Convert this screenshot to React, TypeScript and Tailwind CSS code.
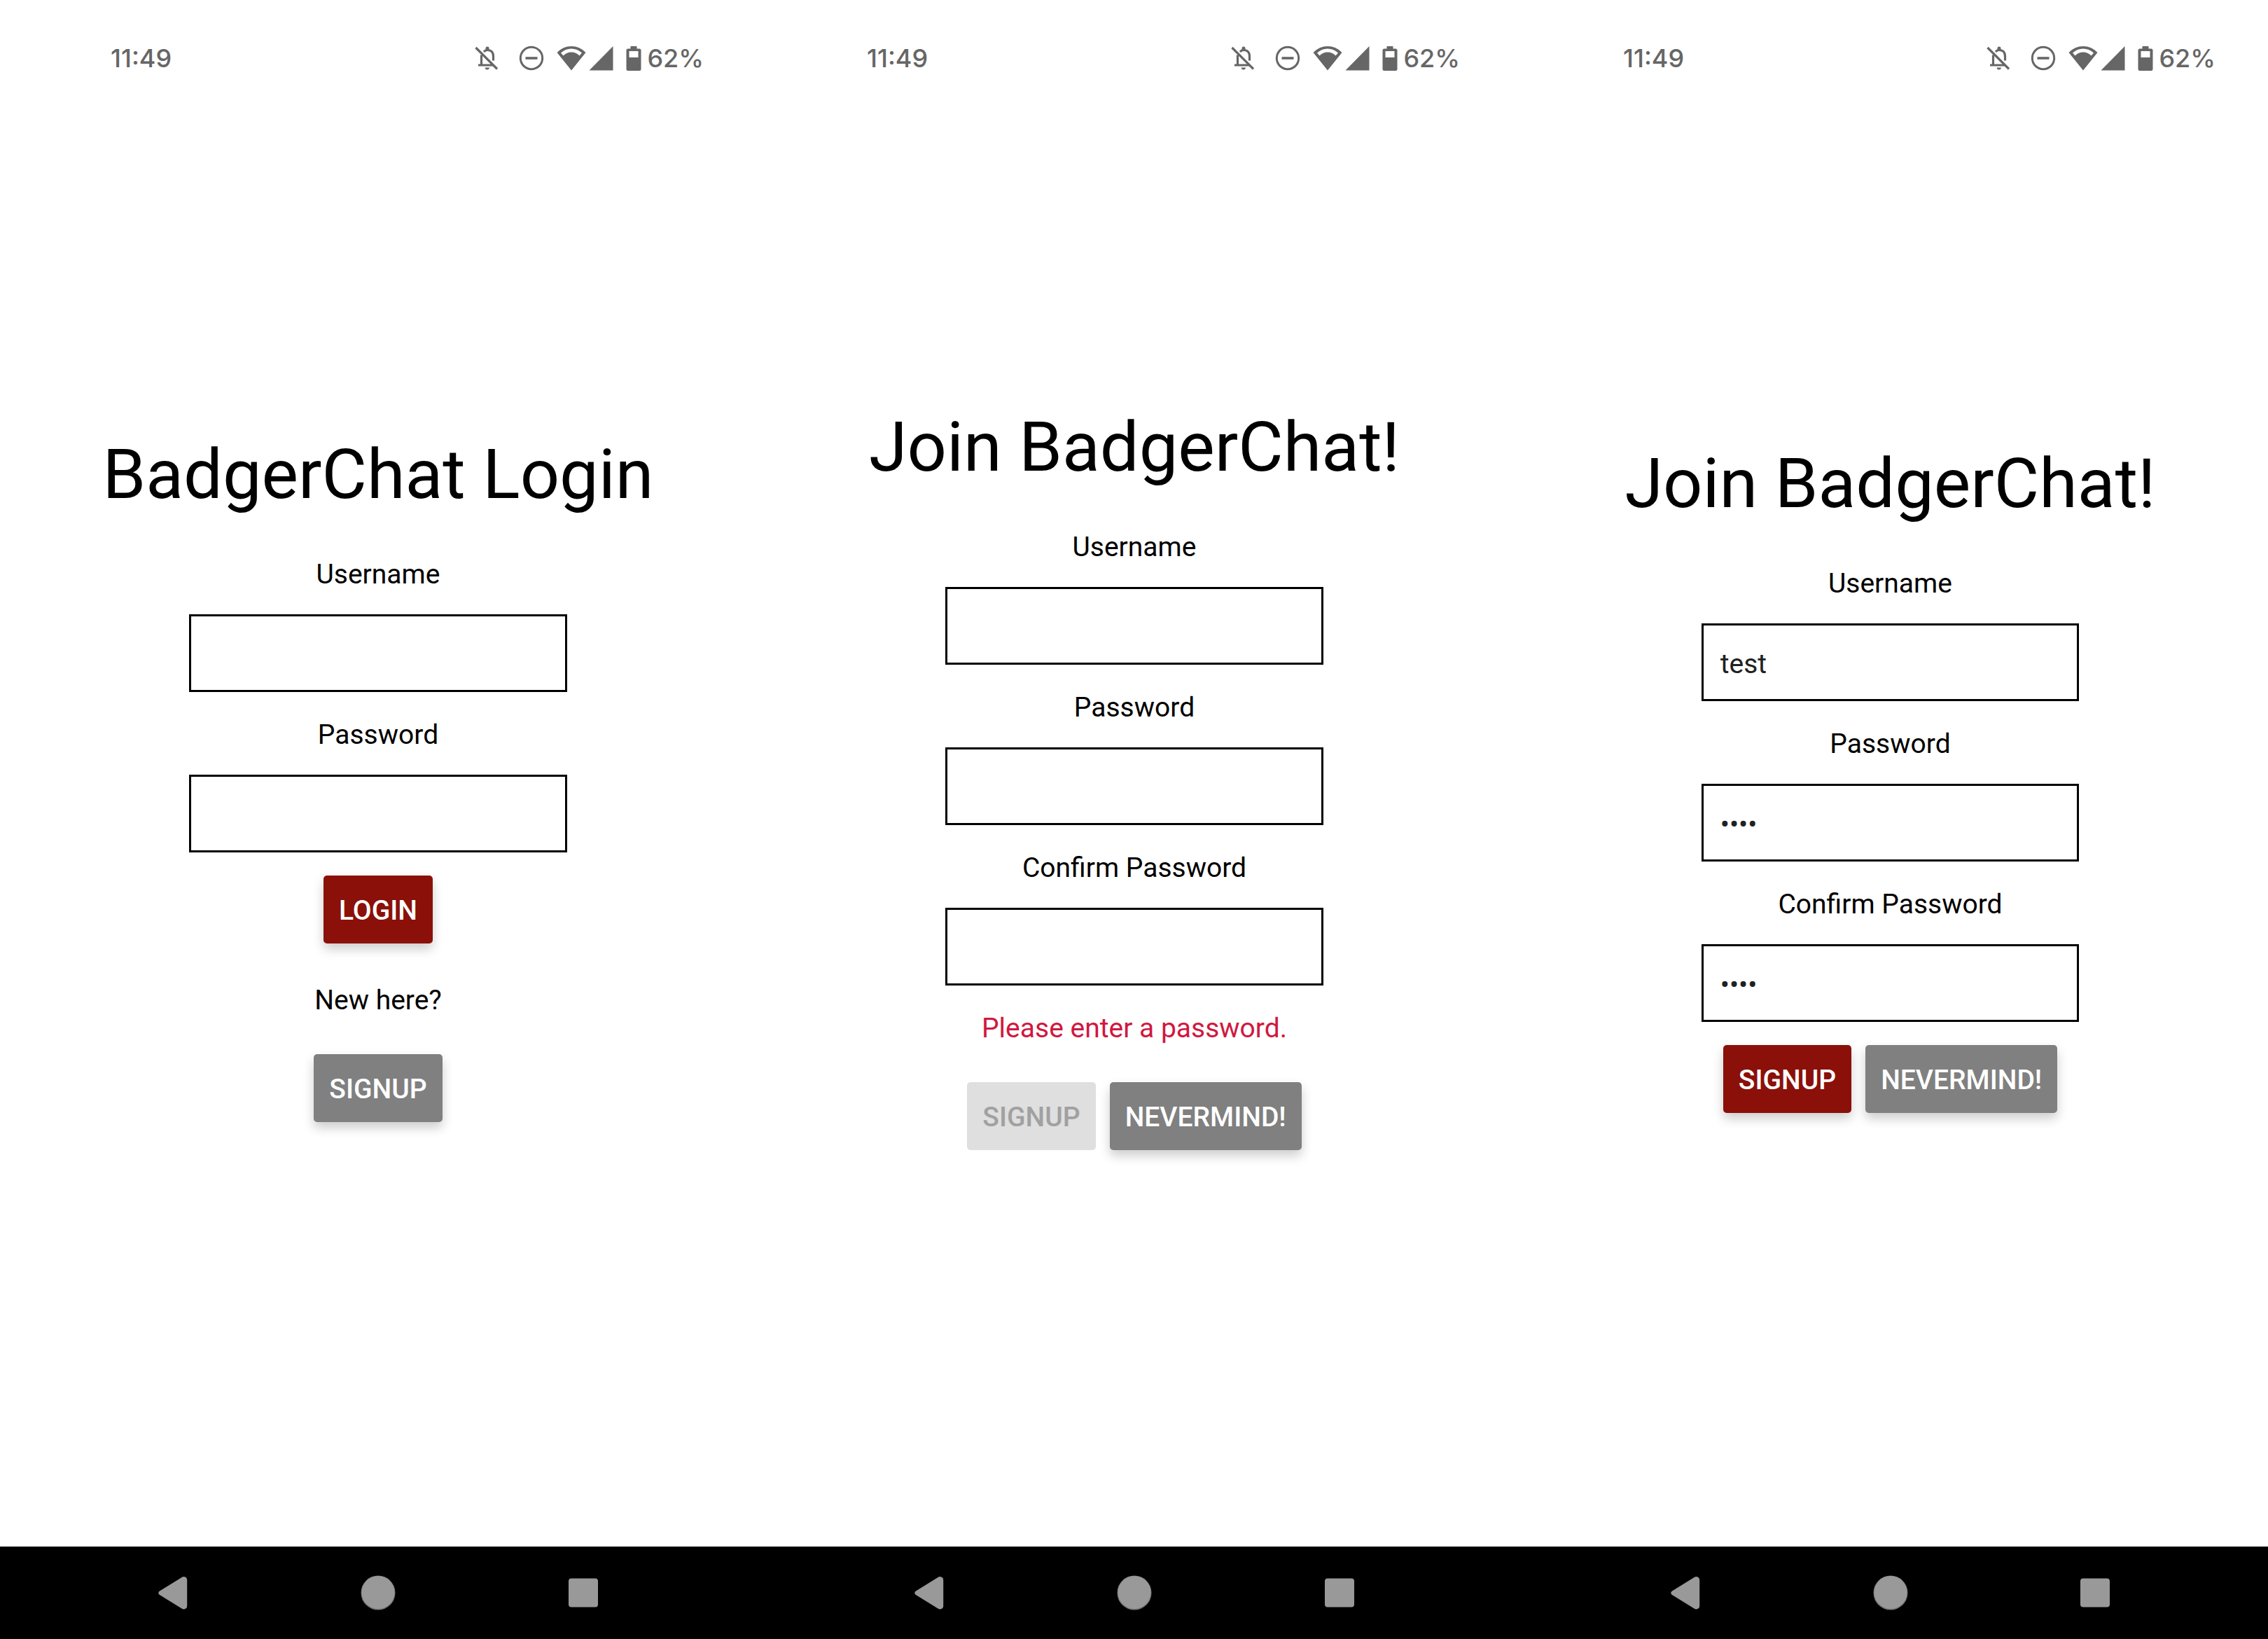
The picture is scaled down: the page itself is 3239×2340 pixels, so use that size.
import { useId } from "react";
import type { ReactNode } from "react";

function BellOffIcon() {
  return (
    <svg viewBox="0 0 34 36" className="h-9 w-[34px]" fill="none" aria-hidden="true">
      <path d="M9.500 13.500v15M13 9q2-2.500 5-2.500 8.500 0 8.500 9v6M5 28h22" stroke="#666" strokeWidth="3.200" />
      <path d="M15.500 6V4q0-2.500 2.500-2.500T20.500 4v2z" fill="#666" />
      <path d="M14.500 31.500h6.500q-.500 3-3.200 3t-3.300-3z" fill="#666" />
      <path d="M1.500 3l30.500 30.500" stroke="#666" strokeWidth="3.200" />
    </svg>
  );
}

function DoNotDisturbIcon() {
  return (
    <svg viewBox="0 0 36 36" className="size-9" fill="none" stroke="#666" aria-hidden="true">
      <circle cx="18" cy="18" r="15.700" strokeWidth="3" />
      <path d="M9.500 18h17" strokeWidth="3.600" />
    </svg>
  );
}

function WifiIcon() {
  return (
    <svg viewBox="0 0 42 36" className="h-9 w-[42px]" aria-hidden="true">
      <path
        fillRule="evenodd"
        fill="#666"
        d="M21 35.500L.500 10Q9 1 21 1t20.500 9zM6 10.500l3.500 4Q14.500 9.500 21 9.500t11.500 5l3.500-4Q29.500 4.500 21 4.500T6 10.500z"
      />
    </svg>
  );
}

function SignalIcon() {
  return (
    <svg viewBox="0 0 35 36" className="h-9 w-[35px]" aria-hidden="true">
      <path d="M34.500 1v34.500H.500z" fill="#666" />
    </svg>
  );
}

function BatteryIcon() {
  return (
    <svg viewBox="0 0 22 36" className="h-9 w-[22px]" aria-hidden="true">
      <path
        fillRule="evenodd"
        fill="#666"
        d="M6.500 1h9v3.500H19q2.500 0 2.500 2.500v26.500q0 2.500-2.500 2.500H3q-2.500 0-2.500-2.500V7q0-2.500 2.500-2.500h3.500zM4.500 8v9h13V8z"
      />
    </svg>
  );
}

function StatusBar() {
  return (
    <header className="flex h-[166px] items-start justify-between pt-[60px] pr-[75px] pl-[158px] font-['Inter',sans-serif] text-[36px] leading-[46px] font-medium text-[#666]">
      <time>11:49</time>
      <div className="flex items-center">
        <BellOffIcon />
        <div className="ml-[29px] flex items-center">
          <DoNotDisturbIcon />
        </div>
        <div className="ml-[18px] flex items-center gap-1">
          <WifiIcon />
          <SignalIcon />
        </div>
        <div className="ml-[18px] flex items-center gap-2">
          <BatteryIcon />
          <span>62%</span>
        </div>
      </div>
    </header>
  );
}

function NavigationBar() {
  return (
    <nav className="flex h-[132px] items-center justify-between bg-black px-[222px]">
      <button type="button" aria-label="Back">
        <svg viewBox="0 0 50 50" className="size-[50px]" aria-hidden="true">
          <path d="M6 22.500L37.500 3Q40 1.500 42.500 2.500Q45.200 3.500 45.200 7v36.500Q45.200 47 42.500 48Q40 49 37.500 47.500L6 28Q2.500 25.200 6 22.500z" fill="#999" />
        </svg>
      </button>
      <button type="button" aria-label="Home">
        <svg viewBox="0 0 50 50" className="size-[50px]" aria-hidden="true">
          <circle cx="25" cy="25" r="24.500" fill="#777" />
          <circle cx="25" cy="24.500" r="23.500" fill="#999" />
        </svg>
      </button>
      <button type="button" aria-label="Recent apps">
        <svg viewBox="0 0 50 50" className="size-[50px]" aria-hidden="true">
          <rect x="4" y="4.500" width="42" height="41" rx="4" fill="#999" />
        </svg>
      </button>
    </nav>
  );
}

function Phone({ title, children }: { title: string; children: ReactNode }) {
  return (
    <section className="flex min-w-0 flex-col">
      <StatusBar />
      <form className="flex flex-1 flex-col items-center justify-center pb-[166px]" onSubmit={(e) => e.preventDefault()}>
        <h1 className="mb-11 text-[99px] leading-[142px] whitespace-nowrap">{title}</h1>
        {children}
      </form>
      <NavigationBar />
    </section>
  );
}

function Field({ label, type = "text", value = "" }: { label: string; type?: string; value?: string }) {
  const id = useId();
  return (
    <div className="mb-[33px] flex w-full flex-col items-center">
      <label htmlFor={id} className="mb-7 text-[39px] leading-[57px]">
        {label}
      </label>
      <input
        id={id}
        type={type}
        defaultValue={value}
        autoComplete="off"
        className="h-[111px] w-1/2 border-3 border-black bg-white px-6 pt-1 text-[39px] text-[#212121] outline-none"
      />
    </div>
  );
}

function Button({ tone, children }: { tone: "red" | "gray" | "disabled"; children: string }) {
  const tones = {
    red: "bg-[#8a1009] text-white shadow-[0_8px_16px_rgba(0,0,0,0.2)]",
    gray: "bg-[#808080] text-white shadow-[0_8px_16px_rgba(0,0,0,0.2)]",
    disabled: "bg-[#dfdfdf] text-[#a1a1a1]",
  };
  return (
    <button
      type="button"
      disabled={tone === "disabled"}
      className={`h-[97px] rounded-[5px] px-[22px] pt-1 text-[39px] font-medium uppercase ${tones[tone]}`}
    >
      {children}
    </button>
  );
}

export default function App() {
  return (
    <main className="grid min-h-screen grid-cols-[1080fr_1080fr_1079fr] bg-white font-['Roboto',sans-serif] text-black">
      <Phone title="BadgerChat Login">
        <Field label="Username" />
        <Field label="Password" type="password" />
        <Button tone="red">Login</Button>
        <p className="mt-[53px] mb-12 text-[39px] leading-[57px]">New here?</p>
        <Button tone="gray">Signup</Button>
      </Phone>
      <Phone title="Join BadgerChat!">
        <Field label="Username" />
        <Field label="Password" type="password" />
        <Field label="Confirm Password" type="password" />
        <p className="mb-12 text-[39px] leading-[57px] text-[#d0183f]">Please enter a password.</p>
        <div className="flex gap-5">
          <Button tone="disabled">Signup</Button>
          <Button tone="gray">Nevermind!</Button>
        </div>
      </Phone>
      <Phone title="Join BadgerChat!">
        <Field label="Username" value="test" />
        <Field label="Password" type="password" value="test" />
        <Field label="Confirm Password" type="password" value="test" />
        <div className="flex gap-5">
          <Button tone="red">Signup</Button>
          <Button tone="gray">Nevermind!</Button>
        </div>
      </Phone>
    </main>
  );
}
